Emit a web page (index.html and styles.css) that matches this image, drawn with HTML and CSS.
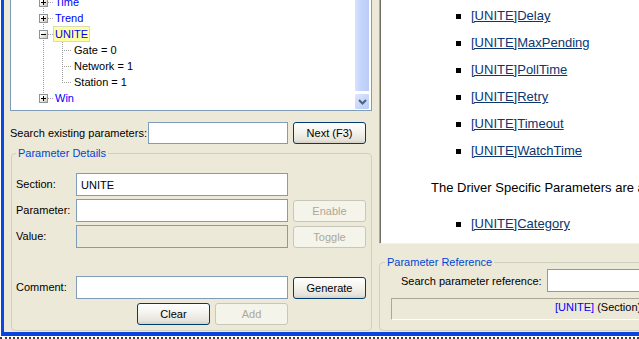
FILE: index.html
```html
<!DOCTYPE html>
<html lang="en">
<head>
    <meta charset="UTF-8">
    <title>Parameter Editor</title>
    <link rel="stylesheet" href="styles.css">
</head>
<body>
    <div class="window">
        <div class="left-pane">
            <div class="tree-box">
                <div class="tree">
                    <div class="node">
                        <span class="exp"><svg width="7" height="7"><path d="M1 3.5h5M3.5 1v5" stroke="#000" shape-rendering="crispEdges"/></svg></span>
                        <span class="label">Time</span>
                    </div>
                    <div class="node">
                        <span class="exp"><svg width="7" height="7"><path d="M1 3.5h5M3.5 1v5" stroke="#000" shape-rendering="crispEdges"/></svg></span>
                        <span class="label">Trend</span>
                    </div>
                    <div class="node">
                        <span class="exp"><svg width="7" height="7"><path d="M1 3.5h5" stroke="#000" shape-rendering="crispEdges"/></svg></span>
                        <span class="label selected">UNITE</span>
                    </div>
                    <div class="children">
                        <div class="leaf"><span class="label">Gate = 0</span></div>
                        <div class="leaf"><span class="label">Network = 1</span></div>
                        <div class="leaf"><span class="label">Station = 1</span></div>
                    </div>
                    <div class="node">
                        <span class="exp"><svg width="7" height="7"><path d="M1 3.5h5M3.5 1v5" stroke="#000" shape-rendering="crispEdges"/></svg></span>
                        <span class="label">Win</span>
                    </div>
                </div>
                <div class="scrollbar">
                    <div class="thumb"></div>
                    <div class="arrow-down">
                        <svg width="9" height="6"><path d="M1 1l3.5 3.5L8 1" fill="none" stroke="#4d6185" stroke-width="2"/></svg>
                    </div>
                </div>
            </div>

            <div class="search-row">
                <label class="search-label">Search existing parameters:</label>
                <input type="text" class="field search-field">
                <button type="button" class="btn">Next (F3)</button>
            </div>

            <fieldset class="group details">
                <legend>Parameter Details</legend>
                <div class="form-row first">
                    <label>Section:</label>
                    <input type="text" class="field" value="UNITE">
                </div>
                <div class="form-row">
                    <label>Parameter:</label>
                    <input type="text" class="field">
                    <button type="button" class="btn" disabled>Enable</button>
                </div>
                <div class="form-row">
                    <label>Value:</label>
                    <input type="text" class="field" disabled>
                    <button type="button" class="btn" disabled>Toggle</button>
                </div>
                <div class="form-row comment-row">
                    <label>Comment:</label>
                    <input type="text" class="field">
                    <button type="button" class="btn">Generate</button>
                </div>
                <div class="action-row">
                    <button type="button" class="btn">Clear</button>
                    <button type="button" class="btn" disabled>Add</button>
                </div>
            </fieldset>
        </div>

        <div class="right-pane">
            <div class="html-view">
                <ul class="param-list">
                    <li><a href="#">[UNITE]Delay</a></li>
                    <li><a href="#">[UNITE]MaxPending</a></li>
                    <li><a href="#">[UNITE]PollTime</a></li>
                    <li><a href="#">[UNITE]Retry</a></li>
                    <li><a href="#">[UNITE]Timeout</a></li>
                    <li><a href="#">[UNITE]WatchTime</a></li>
                </ul>
                <p>The Driver Specific Parameters are as follows:</p>
                <ul class="param-list tail">
                    <li><a href="#">[UNITE]Category</a></li>
                </ul>
            </div>

            <fieldset class="group reference">
                <legend>Parameter Reference</legend>
                <div class="ref-search">
                    <label class="ref-label">Search parameter reference:</label>
                    <input type="text" class="field ref-field">
                </div>
                <div class="status"><span class="tag">[UNITE]</span> (Section)</div>
            </fieldset>
        </div>
    </div>
    <div class="desk-edge"></div>
</body>
</html>
```

FILE: styles.css
```css
html, body {
    margin: 0;
    overflow: hidden;
}

body {
    width: 639px;
    height: 339px;
    background: #fff;
    font-family: 'Liberation Sans', Arial, sans-serif;
    font-size: 11px;
    color: #000;
}

.window {
    display: flex;
    width: 900px;
    height: 332px;
    margin-left: 1px;
    border-left: 3px solid #0a48e0;
    border-bottom: 4px solid #0a44dc;
    background: #ece9d8;
    overflow: hidden;
}

/* left side: tree + details */
.left-pane {
    flex: none;
    width: 368px;
    margin-top: -12px;
}

.tree-box {
    display: flex;
    margin-left: 6px;
    width: 362px;
    height: 123px;
    box-sizing: border-box;
    border: 1px solid #7f9db9;
    padding-right: 1px;
    background: #fff;
}

.tree {
    flex: 1;
    position: relative;
    padding-top: 5px;
}

.tree::before {
    content: '';
    position: absolute;
    left: 32px;
    top: 0;
    height: 110px;
    border-left: 1px dotted #a0a0a0;
}

.node, .leaf {
    position: relative;
    display: flex;
    align-items: flex-start;
    height: 16px;
}

.node {
    padding-left: 28px;
    color: #0000ff;
}

.node::before {
    content: '';
    position: absolute;
    left: 32px;
    top: 8px;
    width: 10px;
    border-top: 1px dotted #a0a0a0;
}

.exp {
    position: relative;
    z-index: 1;
    display: flex;
    width: 9px;
    height: 9px;
    box-sizing: border-box;
    margin: 4px 5px 0 0;
    border: 1px solid #8d9599;
    background: linear-gradient(135deg, #fff 25%, #c9c5b7);
}

.label {
    line-height: 14px;
    padding: 0 1px;
    border: 1px solid transparent;
    white-space: nowrap;
}

.label.selected {
    background: #ffffa4;
    border-color: #dcdcb4;
}

.children {
    position: relative;
}

.children::before {
    content: '';
    position: absolute;
    left: 51px;
    top: 0;
    height: 41px;
    border-left: 1px dotted #a0a0a0;
}

.leaf {
    padding-left: 61px;
}

.leaf::before {
    content: '';
    position: absolute;
    left: 51px;
    top: 8px;
    width: 9px;
    border-top: 1px dotted #a0a0a0;
}

.scrollbar {
    flex: none;
    width: 16px;
    display: flex;
    flex-direction: column;
}

.thumb {
    flex: 1;
    margin-bottom: 1px;
    border: 1px solid #fff;
    border-top: none;
    border-radius: 0 0 2px 2px;
    background: linear-gradient(90deg, #d8e3fe, #c6d6fd 35%, #bacbf6);
}

.arrow-down {
    display: flex;
    align-items: center;
    justify-content: center;
    height: 17px;
    box-sizing: border-box;
    border: 1px solid #fff;
    border-radius: 2px;
    background: linear-gradient(135deg, #dde7fe, #b8ccf7);
}

/* search row */
.search-row {
    display: flex;
    align-items: center;
    height: 22px;
    margin-top: 11px;
    padding-left: 6px;
}

.search-label {
    width: 138px;
    white-space: nowrap;
}

.field {
    box-sizing: border-box;
    width: 212px;
    height: 23px;
    margin: 0;
    padding: 0 4px;
    border: 1px solid #7f9db9;
    background: #fff;
    font: inherit;
    color: #000;
    outline: none;
}

.field:disabled {
    background: #ece9d8;
}

.search-field {
    width: 140px;
    height: 22px;
}

.btn {
    box-sizing: border-box;
    width: 73px;
    height: 22px;
    margin: 0 0 0 5px;
    padding: 0;
    border: 1px solid #003c74;
    border-radius: 3px;
    background: linear-gradient(#fff, #f4f3ee 45%, #e6e3da 85%, #d6d0c5);
    font: inherit;
    color: #000;
}

.btn:disabled {
    border-color: #c9c7ba;
    background: #f5f4ea;
    color: #aca899;
}

/* group boxes */
.group {
    box-sizing: border-box;
    min-width: 0;
    margin: 3px 0 0 7px;
    padding: 0 5px 5px 4px;
    border: 1px solid #d0d0bf;
    border-radius: 4px;
}

.group legend {
    padding: 0 2px;
    line-height: 13px;
    color: #0046d5;
}

.details {
    width: 361px;
}

.form-row {
    display: flex;
    align-items: flex-start;
    height: 23px;
    margin-top: 3px;
}

.form-row.first {
    margin-top: 13px;
}

.form-row.comment-row {
    margin-top: 28px;
}

.form-row label {
    width: 60px;
    line-height: 23px;
}

.form-row .btn {
    margin-top: 1px;
}

.action-row {
    display: flex;
    margin-top: 4px;
    padding-left: 116px;
}

/* right side: html help + reference */
.right-pane {
    flex: none;
    width: 520px;
}

.html-view {
    height: 244px;
    box-sizing: border-box;
    margin-left: 7px;
    border-left: 1px solid #aca899;
    border-bottom: 1px solid #f4f2e8;
    box-shadow: inset 1px 0 #716f64;
    background: #fff;
    font-size: 13px;
    overflow: hidden;
}

.param-list {
    list-style: none;
    margin: 0;
    padding: 2px 0 0;
}

.param-list.tail {
    margin-top: 9px;
    padding-top: 0;
}

.param-list li {
    display: flex;
    align-items: center;
    height: 27px;
    padding-left: 76px;
}

.param-list li::before {
    content: '';
    width: 5px;
    height: 5px;
    margin: 2px 10px 0 0;
    background: #000;
}

.param-list a {
    color: #0b3670;
    line-height: 15px;
}

.html-view p {
    margin: 10px 0 0;
    padding-left: 51px;
    line-height: 27px;
    white-space: nowrap;
}

.reference {
    width: 420px;
    margin-top: 12px;
    padding: 0 5px 10px 5px;
}

.ref-search {
    display: flex;
    align-items: center;
    height: 23px;
    padding-left: 16px;
}

.ref-label {
    width: 146px;
    white-space: nowrap;
}

.ref-field {
    width: 240px;
}

.status {
    height: 22px;
    box-sizing: border-box;
    margin: 6px 0 0 6px;
    padding-left: 163px;
    border: 1px solid;
    border-color: #aca899 #fff #fff #aca899;
    line-height: 16px;
    white-space: nowrap;
}

.tag {
    color: #0000ff;
}

.desk-edge {
    height: 1px;
    border-bottom: 2px dotted #3c3c3c;
}
```
